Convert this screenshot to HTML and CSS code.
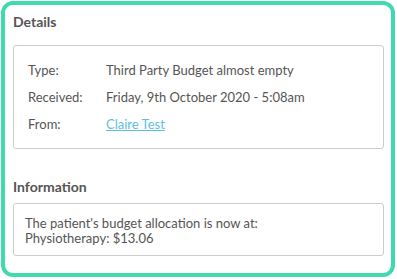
FILE: index.html
```html
<!DOCTYPE html>
<html>
<head>
<meta charset="utf-8">
<link rel="stylesheet" href="styles.css">
</head>
<body>
<div class="card">
  <h2 class="section-title">Details</h2>
  <div class="panel details">
    <div class="row"><span class="label">Type:</span><span class="value">Third Party Budget almost empty</span></div>
    <div class="row"><span class="label">Received:</span><span class="value">Friday, 9th October 2020 - 5:08am</span></div>
    <div class="row"><span class="label">From:</span><span class="value"><a class="link" href="#">Claire Test</a></span></div>
  </div>
  <h2 class="section-title info-title">Information</h2>
  <div class="panel info">
    <p class="info-text">The patient's budget allocation is now at:<br>Physiotherapy: $13.06</p>
  </div>
</div>
</body>
</html>
```

FILE: styles.css
```css
html, body {
  margin: 0;
  padding: 0;
  background: #ffffff;
}
body {
  font-family: Lato, "Open Sans", sans-serif;
  color: #555555;
  font-size: 13px;
}
.card {
  box-sizing: border-box;
  margin: 1px 0 0 1px;
  width: 394px;
  height: 276px;
  border: 4px solid #40d9b0;
  border-radius: 12px;
  padding: 6px 7px 0 8px;
}
.section-title {
  margin: 0;
  font-size: 14px;
  font-weight: 700;
  line-height: 22px;
  color: #555555;
}
.panel {
  border: 1px solid #cccccc;
  border-radius: 3px;
}
.details {
  margin-top: 12px;
  padding: 11px 14px 10px 14px;
}
.row {
  display: flex;
  line-height: 27px;
}
.label {
  width: 78px;
  flex: none;
}
.link {
  color: #5bc0de;
  text-decoration: underline;
}
.info-title {
  margin-top: 27px;
}
.panel.info {
  margin-top: 5px;
  padding: 12px 11px 9px 11px;
}
.info-text {
  margin: 0;
  line-height: 15px;
}
```
